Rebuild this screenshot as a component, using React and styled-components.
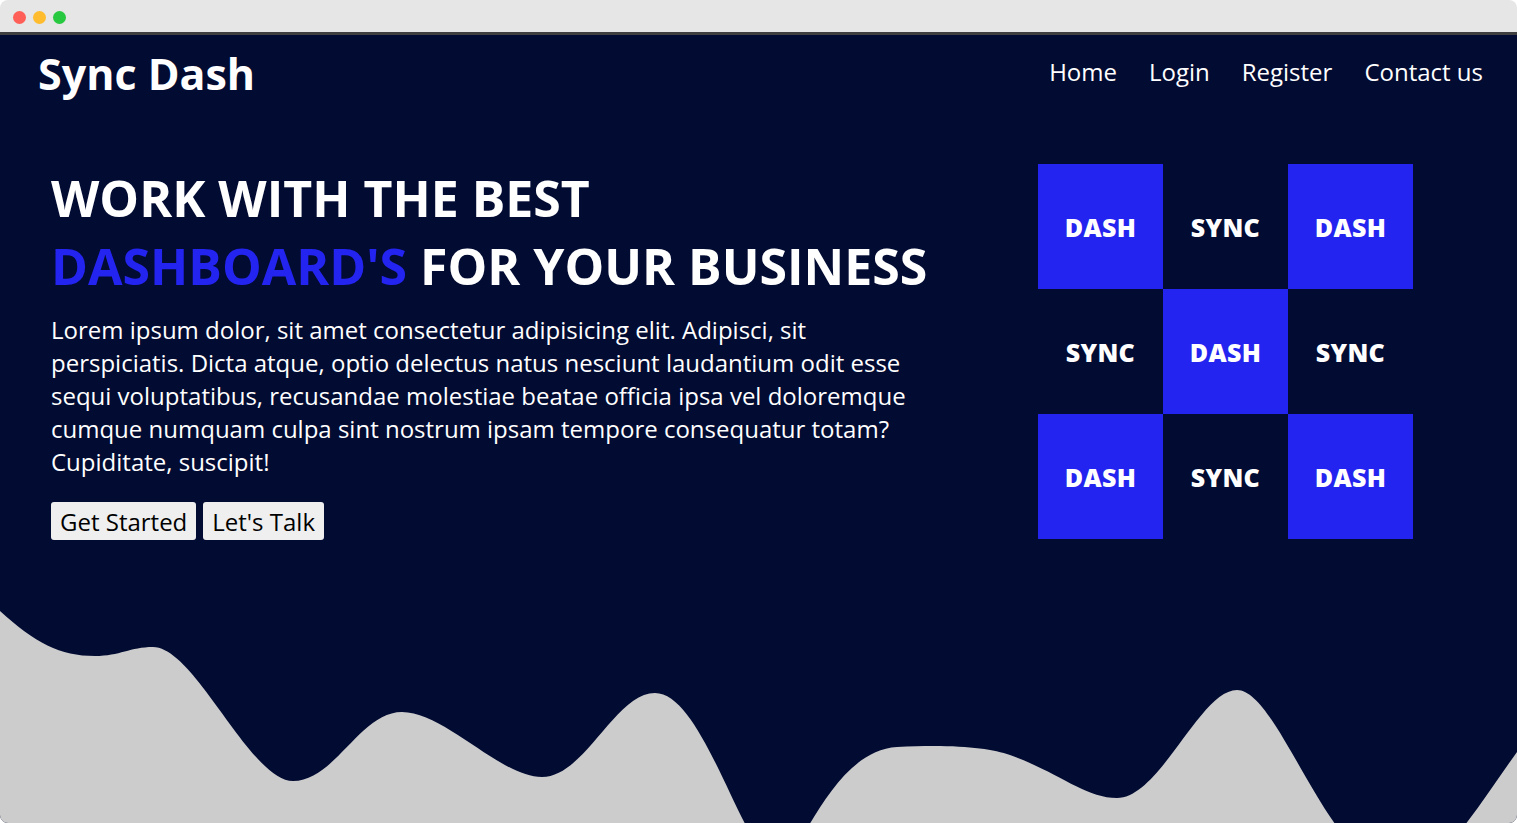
import React from "react"
import styled, { createGlobalStyle } from "styled-components"

const GlobalStyle = createGlobalStyle`
  html, body {
    margin: 0;
    padding: 0;
    background: #ffffff;
    overflow: hidden;
  }
  * {
    box-sizing: border-box;
  }
`

const colors = {
  navy: "#020b32",
  blue: "#2424f0",
  wave: "#cccccc",
  chrome: "#e6e6e6",
}

const Window = styled.div`
  display: flex;
  flex-direction: column;
  height: 100vh;
  border-radius: 8px;
  overflow: hidden;
  font-family: "Open Sans", "Noto Sans", sans-serif;
`

const TitleBar = styled.div`
  display: flex;
  align-items: center;
  gap: 7px;
  height: 35px;
  padding: 2px 0 0 13px;
  background: ${ colors.chrome };
  border-bottom: 3px solid #3f3f3f;
  flex-shrink: 0;
`

const Light = styled.span`
  width: 13px;
  height: 13px;
  border-radius: 50%;
  background: ${ p => p.color };
`

const Page = styled.div`
  flex: 1;
  display: flex;
  flex-direction: column;
  background: ${ colors.navy };
  color: #ffffff;
  overflow: hidden;
`

const Header = styled.header`
  display: flex;
  align-items: center;
  justify-content: space-between;
  height: 76px;
  padding: 0 34px 0 38px;
`

const Logo = styled.h1`
  margin: 0;
  font-size: 43px;
  font-weight: 700;
`

const Nav = styled.nav`
  display: flex;
  gap: 32px;
  margin-top: -3px;
`

const NavLink = styled.a`
  color: #ffffff;
  font-size: 24px;
  text-decoration: none;
`

const Hero = styled.section`
  display: flex;
  justify-content: space-between;
  align-items: flex-start;
  margin-top: 53px;
  padding: 0 104px 0 51px;
`

const Intro = styled.div`
  width: 880px;
`

const Heading = styled.h2`
  margin: 0;
  font-size: 50px;
  font-weight: 700;
  line-height: 68px;
`

const Accent = styled.span`
  color: ${ colors.blue };
`

const Text = styled.p`
  margin: 13px 0 0;
  font-size: 24px;
  line-height: 33px;
`

const Buttons = styled.div`
  display: flex;
  gap: 7px;
  margin-top: 24px;
`

const Button = styled.button`
  height: 38px;
  padding: 0 9px;
  border: none;
  border-radius: 3px;
  background: #efefef;
  color: #000000;
  font-family: inherit;
  font-size: 24px;
`

const Grid = styled.div`
  display: grid;
  grid-template-columns: repeat(3, 125px);
  grid-auto-rows: 125px;
`

const Cell = styled.div`
  display: flex;
  align-items: center;
  justify-content: center;
  background: ${ p => p.filled ? colors.blue : "transparent" };
  font-size: 25px;
  font-weight: 800;
  letter-spacing: 0.3px;
`

const Wave = styled.svg`
  display: block;
  margin-top: auto;
  flex-shrink: 0;
`

const cells = [ true, false, true, false, true, false, true, false, true ]

const wavePath = `
  M0,28
  C35,60 60,73 95,73
  C120,73 130,64 153,64
  C195,64 250,198 293,198
  C335,198 360,129 402,129
  C445,129 500,194 542,194
  C585,194 615,110 655,110
  C705,110 745,280 778,280
  C800,280 830,168 897,164
  C955,161 990,165 1010,172
  C1060,190 1085,215 1117,215
  C1160,215 1200,107 1237,107
  C1280,107 1330,290 1400,290
  C1440,290 1480,220 1517,169
  L1517,330 L0,330 Z
`

const App = () => {
  return (
    <Window>
      <GlobalStyle />
      <TitleBar>
        <Light color="#ff5f57" />
        <Light color="#febc2e" />
        <Light color="#28c840" />
      </TitleBar>
      <Page>
        <Header>
          <Logo>Sync Dash</Logo>
          <Nav>
            <NavLink href="#">Home</NavLink>
            <NavLink href="#">Login</NavLink>
            <NavLink href="#">Register</NavLink>
            <NavLink href="#">Contact us</NavLink>
          </Nav>
        </Header>
        <Hero>
          <Intro>
            <Heading>
              WORK WITH THE BEST<br />
              <Accent>DASHBOARD'S</Accent> FOR YOUR BUSINESS
            </Heading>
            <Text>
              Lorem ipsum dolor, sit amet consectetur adipisicing elit. Adipisci, sit
              perspiciatis. Dicta atque, optio delectus natus nesciunt laudantium odit esse
              sequi voluptatibus, recusandae molestiae beatae officia ipsa vel doloremque
              cumque numquam culpa sint nostrum ipsam tempore consequatur totam?
              Cupiditate, suscipit!
            </Text>
            <Buttons>
              <Button>Get Started</Button>
              <Button>Let's Talk</Button>
            </Buttons>
          </Intro>
          <Grid>
            { cells.map((filled, i) => (
              <Cell key={ i } filled={ filled }>{ filled ? "DASH" : "SYNC" }</Cell>
            )) }
          </Grid>
        </Hero>
        <Wave width="1517" height="240" viewBox="0 0 1517 240">
          <path d={ wavePath } fill={ colors.wave } />
        </Wave>
      </Page>
    </Window>
  )
}

export default App
